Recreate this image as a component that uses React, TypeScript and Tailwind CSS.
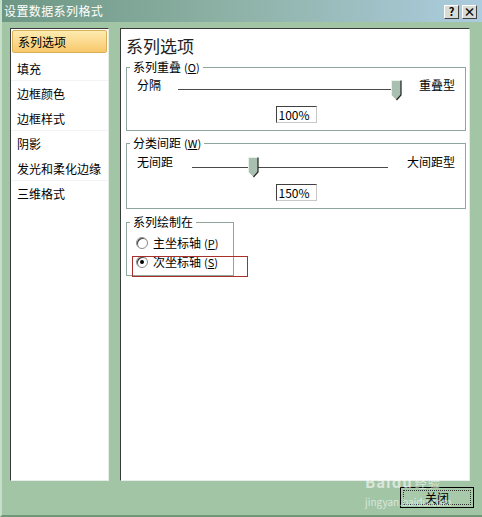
import React from "react";

const Key = ({ k }: { k: string }) => (
  <span className="text-[11px] ml-[3px]">
    (<span className="underline">{k}</span>)
  </span>
);

const Thumb = () => (
  <svg width="11" height="21" viewBox="0 0 11 21" className="absolute">
    <polygon points="0.5,0.5 10,0.5 10,15 5.5,20 0.5,15" fill="#a9bfb0" />
    <polyline points="0.5,15 0.5,0.5 10,0.5" fill="none" stroke="#e8f0ea" strokeWidth="1" />
    <polyline points="10,0.5 10,15 5.5,20" fill="none" stroke="#202020" strokeWidth="1.2" />
  </svg>
);

type SliderProps = {
  left: string;
  right: string;
  trackClass: string;
  thumbClass: string;
  lineClass: string;
  gapClass: string;
};

const SliderRow = ({ left, right, trackClass, thumbClass, lineClass, gapClass }: SliderProps) => (
  <div className="flex items-start h-[20px] pl-[10px]">
    <span className={`leading-[20px] ${gapClass}`}>{left}</span>
    <div className={`relative h-[20px] ${trackClass}`}>
      <div className={`absolute left-0 right-0 h-px bg-[#4a4a4a] ${lineClass}`} />
      <div className={`absolute left-0 right-0 h-px bg-white ${lineClass} translate-y-px`} />
      <div className={thumbClass}>
        <Thumb />
      </div>
    </div>
    <span className="leading-[20px] ml-auto mr-[10px]">{right}</span>
  </div>
);

const Radio = ({ checked, label, k }: { checked: boolean; label: string; k: string }) => (
  <div className="flex items-center h-[18px] pl-[9px]">
    <span className="w-[12px] h-[12px] rounded-full bg-white border border-[#8a8a8a] flex items-center justify-center shadow-[inset_1px_1px_0_#404040]">
      {checked && <span className="w-[4px] h-[4px] rounded-full bg-black" />}
    </span>
    <span className="ml-[5px] leading-[18px]">
      {label}
      <Key k={k} />
    </span>
  </div>
);

const items = [
  { name: "填充", sep: true },
  { name: "边框颜色", sep: false },
  { name: "边框样式", sep: true },
  { name: "阴影", sep: false },
  { name: "发光和柔化边缘", sep: true },
  { name: "三维格式", sep: false },
];

export default function App() {
  return (
    <div className="relative w-[482px] h-[517px] bg-[#a2c5a6] flex flex-col border-l-2 border-l-[#c6dfc8] border-b-2 border-b-[#6f9879] font-['Noto_Sans_CJK_SC',sans-serif] text-[12px] text-black overflow-hidden">
      {/* title bar */}
      <div className="h-[22px] flex items-center justify-between pl-[2px] pr-[5px] bg-gradient-to-r from-[#6d9784] via-[#8fb3a8] to-[#acccdf]">
        <span className="text-white text-[12px] tracking-[0.4px]">设置数据系列格式</span>
        <div className="flex gap-[3px] mt-[1px]">
          <span className="w-[15px] h-[14px] bg-[#d8dcd4] border border-t-white border-l-white border-r-[#404040] border-b-[#404040] flex items-center justify-center text-[11px] font-bold leading-none">
            ?
          </span>
          <span className="w-[15px] h-[14px] bg-[#d8dcd4] border border-t-white border-l-white border-r-[#404040] border-b-[#404040] flex items-center justify-center text-[12px] font-bold leading-none">
            ×
          </span>
        </div>
      </div>

      {/* body */}
      <div className="flex mt-[6px] pl-[8px] gap-[11px]">
        {/* left nav */}
        <div className="w-[99px] h-[453px] bg-white border border-t-[#3a3a3a] border-l-[#3a3a3a] border-r-[#e6ece6] border-b-[#e6ece6] pt-px">
          <div className="mx-px h-[23px] rounded-[2px] border border-[#d9b15a] bg-gradient-to-b from-[#fdebb0] to-[#f8c86a] pl-[5px] leading-[21px] text-[12px]">
            系列选项
          </div>
          <div className="mt-[3px]">
            {items.map((it) => (
              <div
                key={it.name}
                className={`h-[25px] leading-[25px] pl-[6px] ${it.sep ? "border-b border-[#f1f4f6]" : ""}`}
              >
                {it.name}
              </div>
            ))}
          </div>
        </div>

        {/* right panel */}
        <div className="relative w-[350px] h-[453px] bg-white border border-t-[#3a3a3a] border-l-[#3a3a3a] border-r-[#e6ece6] border-b-[#e6ece6] pl-[5px] pr-[3px]">
          <div className="mt-[7px] text-[17px] leading-[20px] text-[#222]">系列选项</div>

          <fieldset className="mt-[4px] border border-[#8fa79a] h-[71px]">
            <legend className="ml-[3px] px-[3px] leading-[14px]">
              系列重叠
              <Key k="O" />
            </legend>
            <div className="mt-px">
              <SliderRow
                left="分隔"
                right="重叠型"
                gapClass="w-[41px]"
                trackClass="w-[219px]"
                lineClass="top-[14px]"
                thumbClass="absolute left-[213px] top-[5px]"
              />
            </div>
            <div className="flex justify-center mt-[11px]">
              <div className="w-[41px] h-[17px] border border-t-[#404040] border-l-[#404040] border-r-[#c8c8c8] border-b-[#c8c8c8] leading-[15px] pl-[2px] text-[12px]">
                100%
              </div>
            </div>
          </fieldset>

          <fieldset className="mt-[5px] border border-[#8fa79a] h-[73px]">
            <legend className="ml-[3px] px-[3px] leading-[14px]">
              分类间距
              <Key k="W" />
            </legend>
            <div className="mt-[2px]">
              <SliderRow
                left="无间距"
                right="大间距型"
                gapClass="w-[55px]"
                trackClass="w-[196px]"
                lineClass="top-[15px]"
                thumbClass="absolute left-[56px] top-[5px]"
              />
            </div>
            <div className="flex justify-center mt-[12px]">
              <div className="w-[41px] h-[17px] border border-t-[#404040] border-l-[#404040] border-r-[#c8c8c8] border-b-[#c8c8c8] leading-[15px] pl-[2px] text-[12px]">
                150%
              </div>
            </div>
          </fieldset>

          <fieldset className="mt-[6px] w-[108px] border border-[#8fa79a] pb-[4px]">
            <legend className="ml-[3px] px-[3px] leading-[14px]">系列绘制在</legend>
            <div className="mt-[5px] flex flex-col gap-px">
              <Radio checked={false} label="主坐标轴" k="P" />
              <Radio checked={true} label="次坐标轴" k="S" />
            </div>
          </fieldset>

          {/* red annotation box */}
          <div className="absolute left-[11px] top-[227px] w-[116px] h-[21px] border border-[#a8302c]" />
        </div>
      </div>

      {/* bottom */}
      <div className="flex justify-end mt-[6px] pr-[8px]">
        <div className="w-[74px] h-[21px] border border-black bg-[#a8caab] p-[2px]">
          <div className="h-full border border-dotted border-[#333] flex items-center justify-center leading-none text-[12px]">
            关闭
          </div>
        </div>
      </div>

      {/* watermark */}
      <div className="absolute left-[363px] top-[474px] flex flex-col items-start pointer-events-none text-white/60">
        <span className="text-[15px] font-bold leading-[16px] tracking-[1px]">
          Baidu<span className="text-[12px] font-normal ml-[2px]">经验</span>
        </span>
        <span className="text-[10px] leading-[12px] mt-[5px]">jingyan.baidu.com</span>
      </div>
    </div>
  );
}
